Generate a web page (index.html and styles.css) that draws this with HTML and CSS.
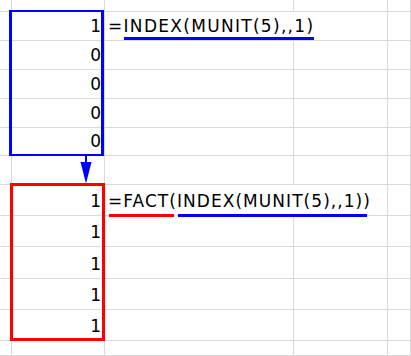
FILE: index.html
```html
<!DOCTYPE html>
<html>
<head>
<meta charset="utf-8">
<link rel="stylesheet" href="styles.css">
</head>
<body>
<div class="sheet">
  <div class="grid">
    <div class="cell"></div><div class="cell"></div><div class="cell"></div><div class="cell"></div><div class="cell"></div>

    <div class="cell"></div><div class="cell num">1</div><div class="cell text wide"><span class="f f-top">=<span class="ul ul-blue ul-top">INDEX(MUNIT(5),,1)</span></span></div><div class="cell"></div>
    <div class="cell"></div><div class="cell num">0</div><div class="cell"></div><div class="cell"></div><div class="cell"></div>
    <div class="cell"></div><div class="cell num">0</div><div class="cell"></div><div class="cell"></div><div class="cell"></div>
    <div class="cell"></div><div class="cell num">0</div><div class="cell"></div><div class="cell"></div><div class="cell"></div>
    <div class="cell"></div><div class="cell num">0</div><div class="cell"></div><div class="cell"></div><div class="cell"></div>

    <div class="cell"></div><div class="cell"></div><div class="cell"></div><div class="cell"></div><div class="cell"></div>

    <div class="cell"></div><div class="cell num">1</div><div class="cell text wide"><span class="f f-bot"><span class="ul ul-red ul-bot">=FACT(</span><span class="ul ul-blue ul-bot ul-in">INDEX(MUNIT(5),,1)</span>)</span></div><div class="cell"></div>
    <div class="cell"></div><div class="cell num">1</div><div class="cell"></div><div class="cell"></div><div class="cell"></div>
    <div class="cell"></div><div class="cell num">1</div><div class="cell"></div><div class="cell"></div><div class="cell"></div>
    <div class="cell"></div><div class="cell num">1</div><div class="cell"></div><div class="cell"></div><div class="cell"></div>
    <div class="cell"></div><div class="cell num">1</div><div class="cell"></div><div class="cell"></div><div class="cell"></div>

    <div class="cell"></div><div class="cell"></div><div class="cell"></div><div class="cell"></div><div class="cell"></div>
  </div>

  <div class="box box-blue"></div>
  <svg class="arrow" width="12" height="28" viewBox="0 0 12 28">
    <rect x="5" y="0" width="2" height="7" fill="#0000ff"/>
    <polygon points="0.5,6 11.5,6 6,27.5" fill="#0000ff"/>
  </svg>
  <div class="box box-red"></div>
</div>
</body>
</html>
```

FILE: styles.css
```css
html, body {
  margin: 0;
  padding: 0;
  background: #ffffff;
}

.sheet {
  position: relative;
  width: 411px;
  height: 356px;
  overflow: hidden;
  background: #ffffff;
}

.grid {
  display: grid;
  grid-template-columns: 12px 93px 189px 94px 1fr;
  grid-template-rows: 12px 29px 29px 29px 29px 28px 29px 31px 31px 32px 31px 31px 1fr;
  width: 411px;
  height: 356px;
  font-family: "DejaVu Sans", Verdana, sans-serif;
  font-size: 17px;
  line-height: 20px;
  color: #000000;
}

.cell {
  box-sizing: border-box;
  border-right: 1px solid #dadada;
  border-bottom: 1px solid #dadada;
  display: flex;
  align-items: flex-end;
  padding-bottom: 4px;
  min-width: 0;
}

.num {
  justify-content: flex-end;
  padding-right: 3px;
}

.text {
  padding-left: 3px;
  white-space: nowrap;
}

.wide {
  grid-column: span 2;
}

.f-top {
  letter-spacing: 1.3px;
}

.f-bot {
  letter-spacing: 1.05px;
}

.ul {
  position: relative;
}

.ul::after {
  content: "";
  position: absolute;
  left: 0;
  right: 0;
  height: 3px;
}

.ul-blue::after {
  background: #0000ff;
}

.ul-red::after {
  background: #ff0000;
  left: 1px;
  right: 3px;
}

.ul-in::after {
  left: 1px;
  right: -4px;
}

.ul-top::after {
  top: calc(100% + 1px);
}

.ul-bot::after {
  top: calc(100% + 3px);
}

.box {
  position: absolute;
  box-sizing: border-box;
}

.box-blue {
  left: 9px;
  top: 10px;
  width: 95px;
  height: 146px;
  border-style: solid;
  border-color: #0000ff;
  border-width: 2px 3px;
}

.box-red {
  left: 10px;
  top: 183px;
  width: 95px;
  height: 158px;
  border: 3px solid #ff0000;
}

.arrow {
  position: absolute;
  left: 80px;
  top: 156px;
  display: block;
}
```
